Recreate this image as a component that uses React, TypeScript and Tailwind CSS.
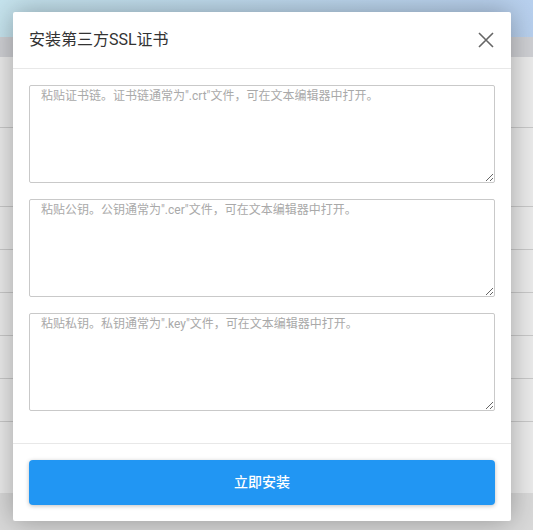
import React from "react";

const font = { fontFamily: 'Roboto, "Noto Sans CJK SC", sans-serif' };

function Field({ placeholder }: { placeholder: string }) {
  return (
    <textarea
      placeholder={placeholder}
      className="block w-full h-[98px] resize-y border border-[#c9c9c9] rounded-[2px] bg-white px-[11px] pt-[3px] text-[12px] leading-[15px] text-[#333] placeholder:text-[#a9a9a9] outline-none"
      style={font}
    />
  );
}

export default function App() {
  return (
    <div className="relative w-[533px] h-[530px] overflow-hidden bg-[#ebebeb]" style={font}>
      {/* background page */}
      <div className="flex flex-col h-full">
        <div className="h-[37px] bg-gradient-to-r from-[#c6e4ee] to-[#b8d0ee]" />
        <div className="h-[20px] bg-[#cfd0d4]" />
        <div className="h-[71px] border-b border-[#c9c9c9]" />
        <div className="h-[79px] border-b border-[#c9c9c9]" />
        <div className="h-[43px] border-b border-[#c9c9c9]" />
        <div className="h-[43px] border-b border-[#c9c9c9]" />
        <div className="h-[43px] border-b border-[#c9c9c9]" />
        <div className="h-[43px] border-b border-[#c9c9c9]" />
        <div className="h-[43px] border-b border-[#c9c9c9]" />
        <div className="flex-1" />
        <div className="h-[37px] bg-[#d9d9d9]" />
      </div>

      {/* modal */}
      <div className="absolute left-[13px] top-[12px] w-[498px] h-[509px] bg-white rounded-[2px] shadow-[0_0_28px_rgba(0,0,0,0.32)] flex flex-col">
        <div className="h-[57px] flex items-center justify-between pl-4 pr-[17px] border-b border-[#e8e8e8]">
          <span className="text-[16px] text-[#333]">安装第三方SSL证书</span>
          <svg width="16" height="16" viewBox="0 0 16 16" className="text-[#666]">
            <path d="M1 1L15 15M15 1L1 15" stroke="currentColor" strokeWidth="1.6" fill="none" />
          </svg>
        </div>
        <div className="flex flex-col gap-4 px-4 pt-4 pb-8">
          <Field placeholder={'粘贴证书链。证书链通常为".crt"文件，可在文本编辑器中打开。'} />
          <Field placeholder={'粘贴公钥。公钥通常为".cer"文件，可在文本编辑器中打开。'} />
          <Field placeholder={'粘贴私钥。私钥通常为".key"文件，可在文本编辑器中打开。'} />
        </div>
        <div className="border-t border-[#e8e8e8] px-4 pt-[16px]">
          <button className="w-full h-[45px] rounded-[4px] bg-[#2196f3] text-white text-[14px] font-medium shadow-[0_1px_4px_rgba(0,0,0,0.25)]">
            立即安装
          </button>
        </div>
      </div>
    </div>
  );
}
